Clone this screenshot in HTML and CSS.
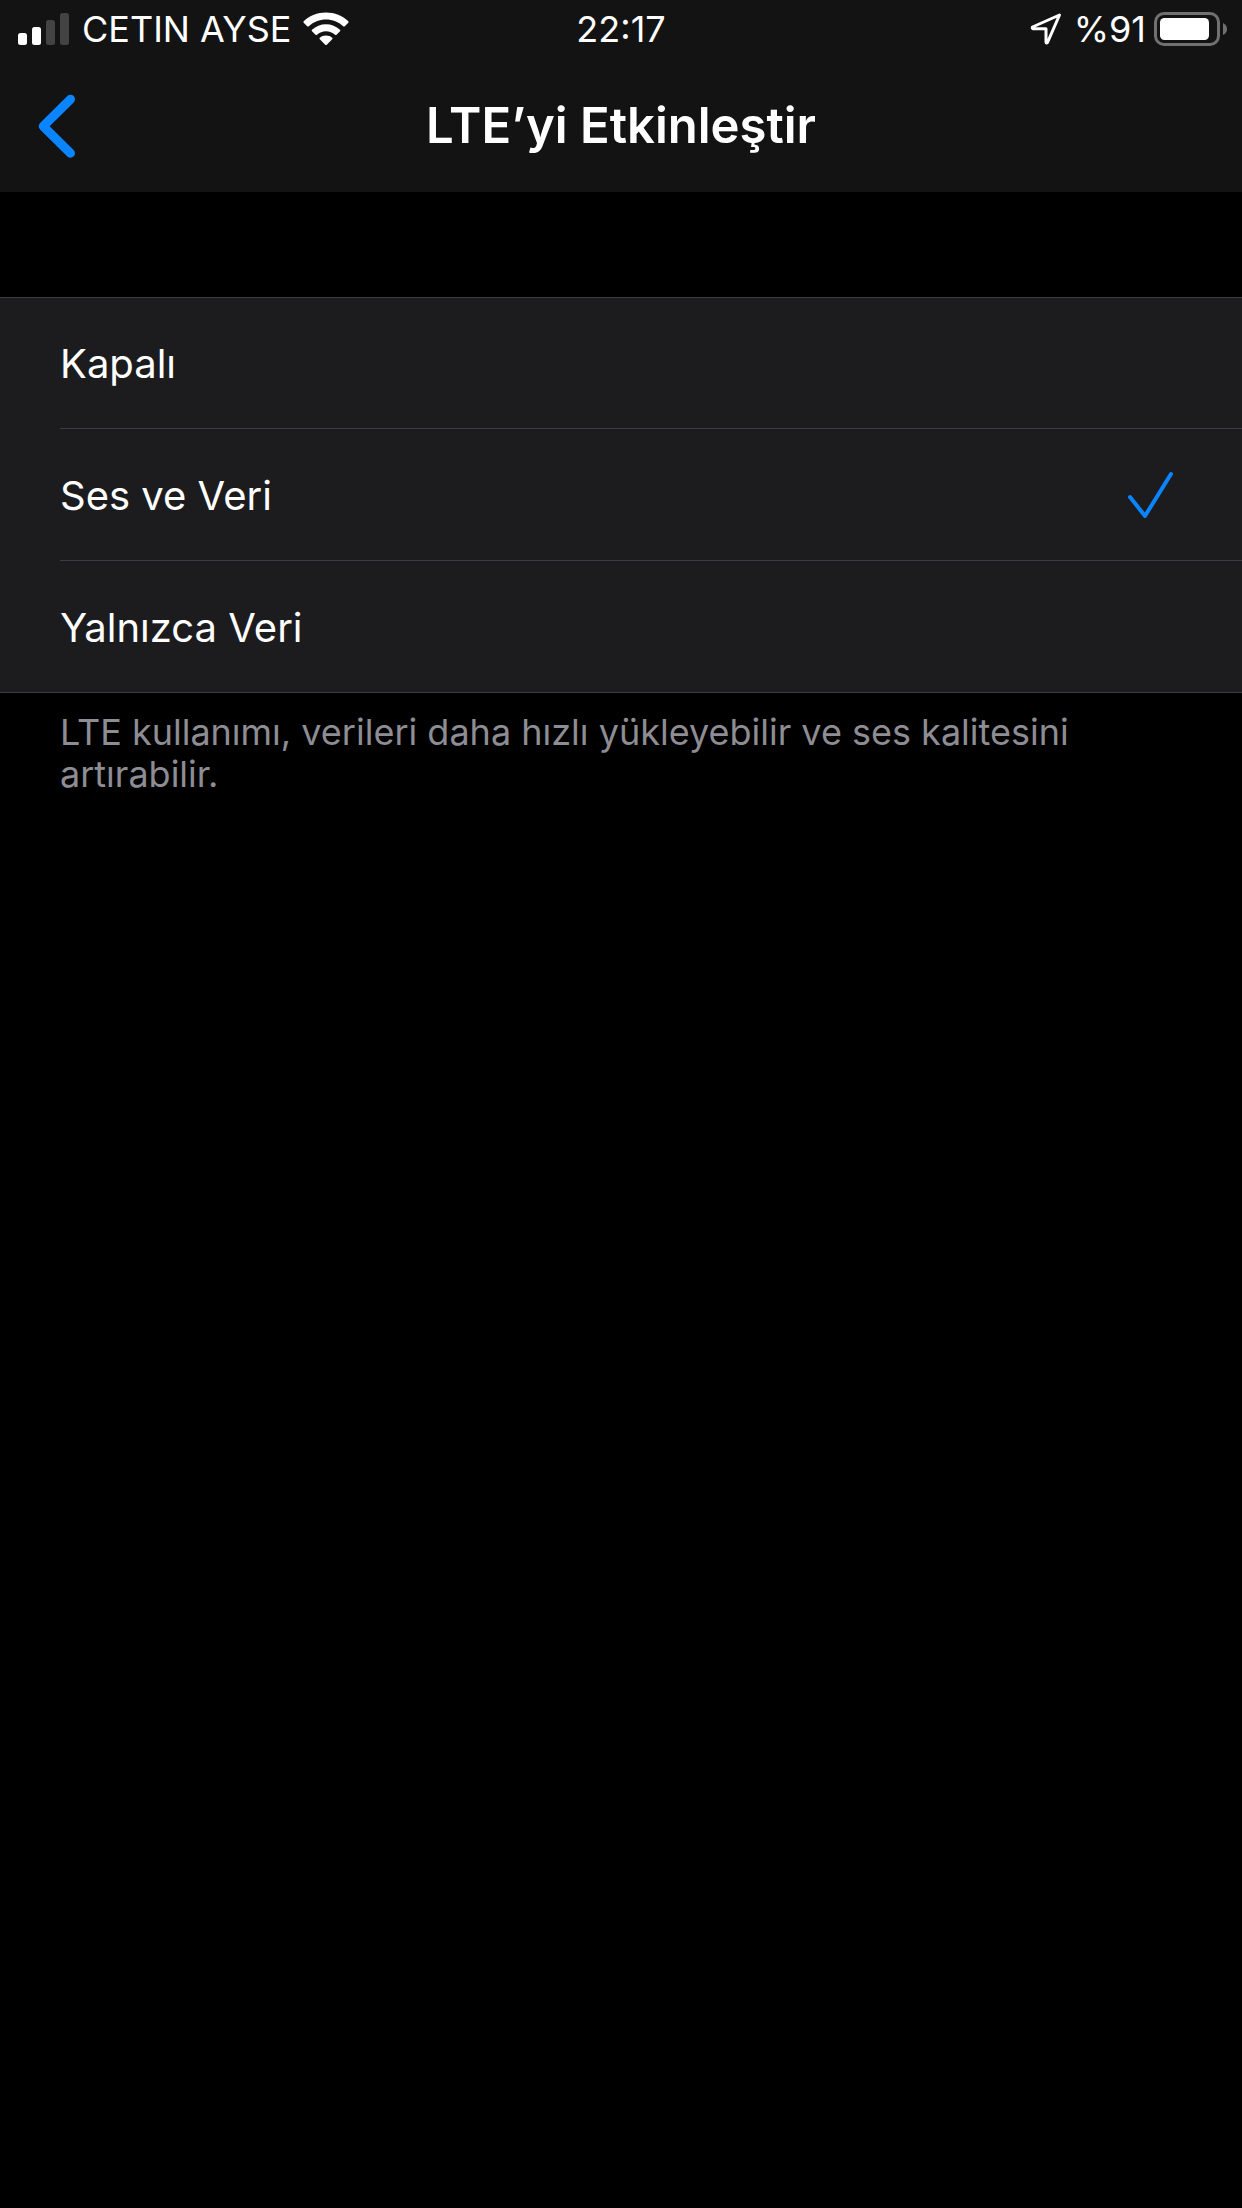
FILE: index.html
```html
<!DOCTYPE html>
<html lang="tr">
<head>
<meta charset="utf-8">
<meta name="viewport" content="width=device-width, initial-scale=1">
<title>LTE’yi Etkinleştir</title>
<link rel="stylesheet" href="styles.css">
</head>
<body>
<header class="top">
  <div class="status">
    <div class="status-left">
      <svg class="signal" width="52" height="34" viewBox="0 0 52 34" aria-hidden="true">
        <rect x="0" y="21" width="9" height="12" rx="2.5" fill="#fff"/>
        <rect x="14" y="15" width="9" height="18" rx="2.5" fill="#fff"/>
        <rect x="28" y="8" width="9" height="25" rx="2.5" fill="#434343"/>
        <rect x="42" y="1" width="9" height="32" rx="2.5" fill="#434343"/>
      </svg>
      <span class="carrier">CETIN AYSE</span>
      <svg class="wifi" width="46" height="34" viewBox="0 0 46 34" fill="#fff" aria-hidden="true">
        <path d="M23 .5C14.500 .5 6.500 3.700.7 9.300Q0 10 .7 10.700L4.200 14.200Q5 14.900 5.800 14.200C10.500 9.800 16.500 7.500 23 7.500S35.500 9.800 40.200 14.200Q41 14.900 41.800 14.200L45.300 10.700Q46 10 45.300 9.300C39.500 3.700 31.500 .5 23 .5Z"/>
        <path d="M23 12.300C17.700 12.300 12.800 14.300 9 17.800Q8.200 18.500 9 19.200L12.500 22.700Q13.200 23.400 14 22.700C16.500 20.400 19.600 19.200 23 19.200S29.500 20.400 32 22.700Q32.800 23.400 33.500 22.700L37 19.200Q37.800 18.500 37 17.800C33.200 14.300 28.300 12.300 23 12.300Z"/>
        <path d="M23 23.500C20.600 23.500 18.500 24.300 16.800 25.700Q16 26.400 16.800 27.200L22.200 32.700Q23 33.500 23.800 32.700L29.200 27.200Q30 26.400 29.200 25.700C27.500 24.300 25.400 23.500 23 23.500Z"/>
      </svg>
    </div>
    <time class="clock">22:17</time>
    <div class="status-right">
      <svg class="location" width="32" height="32" viewBox="0 0 32 32" fill="none" stroke="#fff" stroke-width="3" stroke-linejoin="round" aria-hidden="true">
        <path d="M29.500 2L2.500 14Q1.800 15.500 3 15.700H16V29Q16.300 30.800 17.500 29.500Z"/>
      </svg>
      <span>%91</span>
      <svg class="battery" width="74" height="34" viewBox="0 0 74 34" aria-hidden="true">
        <rect x="1.500" y="1.500" width="63" height="31" rx="8.500" fill="none" stroke="#717171" stroke-width="3"/>
        <rect x="6" y="6" width="49" height="22" rx="4.500" fill="#fff"/>
        <path d="M69 11Q73 13 73 17T69 23Z" fill="#717171"/>
      </svg>
    </div>
  </div>
  <nav class="nav">
    <button class="back" type="button" aria-label="Geri">
      <svg width="40" height="64" viewBox="0 0 40 64" fill="none" stroke="#0a84ff" stroke-width="9" stroke-linecap="round" stroke-linejoin="round" aria-hidden="true">
        <path d="M32.500 5.200L5.200 32.200L32.500 59.200"/>
      </svg>
    </button>
    <h1 class="title">LTE’yi Etkinleştir</h1>
  </nav>
</header>
<main class="content">
  <form class="options" aria-describedby="lte-note">
    <label class="option" for="lte-off">
      <span class="option-body">Kapalı
        <span class="mark">
          <input class="radio" type="radio" name="lte" id="lte-off">
          <svg class="check" width="46" height="46" viewBox="0 0 46 46" aria-hidden="true"><path d="M2 24L17 43L43 1"/></svg>
        </span>
      </span>
    </label>
    <label class="option" for="lte-all">
      <span class="option-body">Ses ve Veri
        <span class="mark">
          <input class="radio" type="radio" name="lte" id="lte-all" checked>
          <svg class="check" width="46" height="46" viewBox="0 0 46 46" aria-hidden="true"><path d="M2 24L17 43L43 1"/></svg>
        </span>
      </span>
    </label>
    <label class="option" for="lte-data">
      <span class="option-body">Yalnızca Veri
        <span class="mark">
          <input class="radio" type="radio" name="lte" id="lte-data">
          <svg class="check" width="46" height="46" viewBox="0 0 46 46" aria-hidden="true"><path d="M2 24L17 43L43 1"/></svg>
        </span>
      </span>
    </label>
  </form>
  <p class="note" id="lte-note">LTE kullanımı, verileri daha hızlı yükleyebilir ve ses kalitesini artırabilir.</p>
</main>
</body>
</html>
```

FILE: styles.css
```css
* {
  box-sizing: border-box;
}

body {
  margin: 0;
  min-height: 100vh;
  background: #000;
  color: #fff;
  font-family: Inter, "Liberation Sans", sans-serif;
}

svg {
  display: block;
  flex: none;
}

.top {
  background: #131313;
}

.status {
  display: grid;
  grid-template-columns: 1fr auto 1fr;
  align-items: center;
  height: 60px;
  padding: 0 14px 2px;
  font-size: 36px;
  line-height: 42px;
}

.status-left,
.status-right {
  display: flex;
  align-items: center;
}

.status-left {
  gap: 12px;
  padding-left: 4px;
}

.status-right {
  justify-content: flex-end;
  gap: 8px;
}

.location {
  margin-right: 4px;
}

.nav {
  display: grid;
  grid-template-columns: 1fr auto 1fr;
  align-items: center;
  height: 132px;
  padding: 0 38px;
}

.back {
  justify-self: start;
  padding: 0;
  border: 0;
  background: none;
  cursor: pointer;
}

.check {
  overflow: visible;
}

.title {
  margin: 0;
  font-size: 49px;
  font-weight: 600;
  line-height: 60px;
}

.content {
  padding-top: 105px;
}

.options {
  border-top: 1px solid #3d3d41;
  border-bottom: 1px solid #3d3d41;
  background: #1c1c1e;
}

.option {
  display: block;
  padding-left: 60px;
  cursor: pointer;
}

.option-body {
  display: flex;
  align-items: center;
  justify-content: space-between;
  height: 132px;
  padding: 2px 68px 0 0;
  font-size: 40px;
  line-height: 52px;
}

.option:first-child .option-body {
  height: 130px;
}

.option + .option .option-body {
  border-top: 1px solid #3d3d41;
}

.mark {
  display: grid;
}

.radio,
.check {
  grid-area: 1 / 1;
}

.radio {
  appearance: none;
  width: 46px;
  height: 46px;
  margin: 0;
}

.check {
  visibility: hidden;
  fill: none;
  stroke: #0a84ff;
  stroke-width: 4;
  stroke-linecap: round;
  stroke-linejoin: round;
}

.radio:checked + .check {
  visibility: visible;
}

.note {
  margin: 0;
  padding: 18px 60px;
  color: #8d8d93;
  font-size: 36px;
  line-height: 42px;
}
```
